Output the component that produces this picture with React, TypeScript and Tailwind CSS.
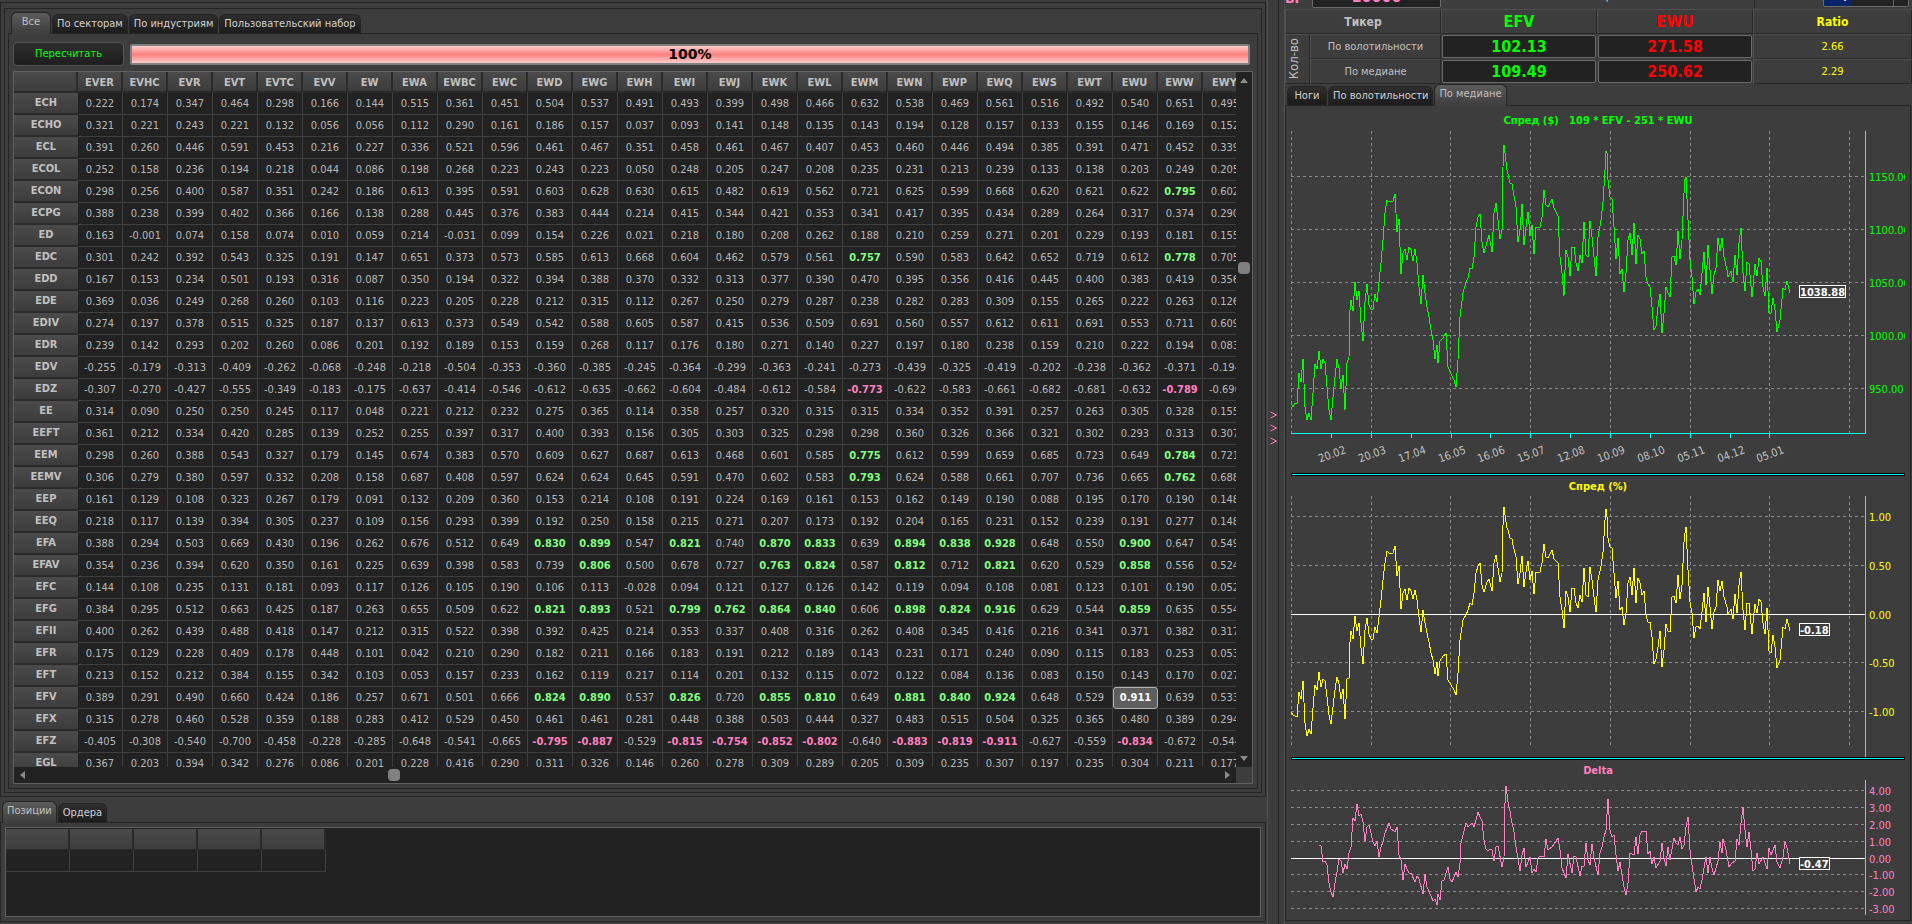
import { useState } from "react";
import clsx from "clsx";

const COLUMNS =
	"EVER EVHC EVR EVT EVTC EVV EW EWA EWBC EWC EWD EWG EWH EWI EWJ EWK EWL EWM EWN EWP EWQ EWS EWT EWU EWW EWY".split(
		" "
	);

// ticker followed by its correlation with every column
const ROWS = [
	"ECH 0.222 0.174 0.347 0.464 0.298 0.166 0.144 0.515 0.361 0.451 0.504 0.537 0.491 0.493 0.399 0.498 0.466 0.632 0.538 0.469 0.561 0.516 0.492 0.540 0.651 0.495",
	"ECHO 0.321 0.221 0.243 0.221 0.132 0.056 0.056 0.112 0.290 0.161 0.186 0.157 0.037 0.093 0.141 0.148 0.135 0.143 0.194 0.128 0.157 0.133 0.155 0.146 0.169 0.152",
	"ECL 0.391 0.260 0.446 0.591 0.453 0.216 0.227 0.336 0.521 0.596 0.461 0.467 0.351 0.458 0.461 0.467 0.407 0.453 0.460 0.446 0.494 0.385 0.391 0.471 0.452 0.339",
	"ECOL 0.252 0.158 0.236 0.194 0.218 0.044 0.086 0.198 0.268 0.223 0.243 0.223 0.050 0.248 0.205 0.247 0.208 0.235 0.231 0.213 0.239 0.133 0.138 0.203 0.249 0.205",
	"ECON 0.298 0.256 0.400 0.587 0.351 0.242 0.186 0.613 0.395 0.591 0.603 0.628 0.630 0.615 0.482 0.619 0.562 0.721 0.625 0.599 0.668 0.620 0.621 0.622 0.795 0.602",
	"ECPG 0.388 0.238 0.399 0.402 0.366 0.166 0.138 0.288 0.445 0.376 0.383 0.444 0.214 0.415 0.344 0.421 0.353 0.341 0.417 0.395 0.434 0.289 0.264 0.317 0.374 0.290",
	"ED 0.163 -0.001 0.074 0.158 0.074 0.010 0.059 0.214 -0.031 0.099 0.154 0.226 0.021 0.218 0.180 0.208 0.262 0.188 0.210 0.259 0.271 0.201 0.229 0.193 0.181 0.155",
	"EDC 0.301 0.242 0.392 0.543 0.325 0.191 0.147 0.651 0.373 0.573 0.585 0.613 0.668 0.604 0.462 0.579 0.561 0.757 0.590 0.583 0.642 0.652 0.719 0.612 0.778 0.705",
	"EDD 0.167 0.153 0.234 0.501 0.193 0.316 0.087 0.350 0.194 0.322 0.394 0.388 0.370 0.332 0.313 0.377 0.390 0.470 0.395 0.356 0.416 0.445 0.400 0.383 0.419 0.356",
	"EDE 0.369 0.036 0.249 0.268 0.260 0.103 0.116 0.223 0.205 0.228 0.212 0.315 0.112 0.267 0.250 0.279 0.287 0.238 0.282 0.283 0.309 0.155 0.265 0.222 0.263 0.126",
	"EDIV 0.274 0.197 0.378 0.515 0.325 0.187 0.137 0.613 0.373 0.549 0.542 0.588 0.605 0.587 0.415 0.536 0.509 0.691 0.560 0.557 0.612 0.611 0.691 0.553 0.711 0.609",
	"EDR 0.239 0.142 0.293 0.202 0.260 0.086 0.201 0.192 0.189 0.153 0.159 0.268 0.117 0.176 0.180 0.271 0.140 0.227 0.197 0.180 0.238 0.159 0.210 0.222 0.194 0.083",
	"EDV -0.255 -0.179 -0.313 -0.409 -0.262 -0.068 -0.248 -0.218 -0.504 -0.353 -0.360 -0.385 -0.245 -0.364 -0.299 -0.363 -0.241 -0.273 -0.439 -0.325 -0.419 -0.202 -0.238 -0.362 -0.371 -0.194",
	"EDZ -0.307 -0.270 -0.427 -0.555 -0.349 -0.183 -0.175 -0.637 -0.414 -0.546 -0.612 -0.635 -0.662 -0.604 -0.484 -0.612 -0.584 -0.773 -0.622 -0.583 -0.661 -0.682 -0.681 -0.632 -0.789 -0.690",
	"EE 0.314 0.090 0.250 0.250 0.245 0.117 0.048 0.221 0.212 0.232 0.275 0.365 0.114 0.358 0.257 0.320 0.315 0.315 0.334 0.352 0.391 0.257 0.263 0.305 0.328 0.155",
	"EEFT 0.361 0.212 0.334 0.420 0.285 0.139 0.252 0.255 0.397 0.317 0.400 0.393 0.156 0.305 0.303 0.325 0.298 0.298 0.360 0.326 0.366 0.321 0.302 0.293 0.313 0.307",
	"EEM 0.298 0.260 0.388 0.543 0.327 0.179 0.145 0.674 0.383 0.570 0.609 0.627 0.687 0.613 0.468 0.601 0.585 0.775 0.612 0.599 0.659 0.685 0.723 0.649 0.784 0.721",
	"EEMV 0.306 0.279 0.380 0.597 0.332 0.208 0.158 0.687 0.408 0.597 0.624 0.624 0.645 0.591 0.470 0.602 0.583 0.793 0.624 0.588 0.661 0.707 0.736 0.665 0.762 0.688",
	"EEP 0.161 0.129 0.108 0.323 0.267 0.179 0.091 0.132 0.209 0.360 0.153 0.214 0.108 0.191 0.224 0.169 0.161 0.153 0.162 0.149 0.190 0.088 0.195 0.170 0.190 0.148",
	"EEQ 0.218 0.117 0.139 0.394 0.305 0.237 0.109 0.156 0.293 0.399 0.192 0.250 0.158 0.215 0.271 0.207 0.173 0.192 0.204 0.165 0.231 0.152 0.239 0.191 0.277 0.148",
	"EFA 0.388 0.294 0.503 0.669 0.430 0.196 0.262 0.676 0.512 0.649 0.830 0.899 0.547 0.821 0.740 0.870 0.833 0.639 0.894 0.838 0.928 0.648 0.550 0.900 0.647 0.549",
	"EFAV 0.354 0.236 0.394 0.620 0.350 0.161 0.225 0.639 0.398 0.583 0.739 0.806 0.500 0.678 0.727 0.763 0.824 0.587 0.812 0.712 0.821 0.620 0.529 0.858 0.556 0.524",
	"EFC 0.144 0.108 0.235 0.131 0.181 0.093 0.117 0.126 0.105 0.190 0.106 0.113 -0.028 0.094 0.121 0.127 0.126 0.142 0.119 0.094 0.108 0.081 0.123 0.101 0.190 0.052",
	"EFG 0.384 0.295 0.512 0.663 0.425 0.187 0.263 0.655 0.509 0.622 0.821 0.893 0.521 0.799 0.762 0.864 0.840 0.606 0.898 0.824 0.916 0.629 0.544 0.859 0.635 0.554",
	"EFII 0.400 0.262 0.439 0.488 0.418 0.147 0.212 0.315 0.522 0.398 0.392 0.425 0.214 0.353 0.337 0.408 0.316 0.262 0.408 0.345 0.416 0.216 0.341 0.371 0.382 0.317",
	"EFR 0.175 0.129 0.228 0.409 0.178 0.448 0.101 0.042 0.210 0.290 0.182 0.211 0.166 0.183 0.191 0.212 0.189 0.143 0.231 0.171 0.240 0.090 0.115 0.183 0.253 0.053",
	"EFT 0.213 0.152 0.212 0.384 0.155 0.342 0.103 0.053 0.157 0.233 0.162 0.119 0.217 0.114 0.201 0.132 0.115 0.072 0.122 0.084 0.136 0.083 0.150 0.143 0.170 0.027",
	"EFV 0.389 0.291 0.490 0.660 0.424 0.186 0.257 0.671 0.501 0.666 0.824 0.890 0.537 0.826 0.720 0.855 0.810 0.649 0.881 0.840 0.924 0.648 0.529 0.911 0.639 0.533",
	"EFX 0.315 0.278 0.460 0.528 0.359 0.188 0.283 0.412 0.529 0.450 0.461 0.461 0.281 0.448 0.388 0.503 0.444 0.327 0.483 0.515 0.504 0.325 0.365 0.480 0.389 0.294",
	"EFZ -0.405 -0.308 -0.540 -0.700 -0.458 -0.228 -0.285 -0.648 -0.541 -0.665 -0.795 -0.887 -0.529 -0.815 -0.754 -0.852 -0.802 -0.640 -0.883 -0.819 -0.911 -0.627 -0.559 -0.834 -0.672 -0.544",
	"EGL 0.367 0.203 0.394 0.342 0.276 0.086 0.201 0.228 0.416 0.290 0.311 0.326 0.146 0.260 0.278 0.309 0.289 0.205 0.309 0.235 0.307 0.197 0.235 0.304 0.211 0.177",
].map((row) => row.split(" "));

// series samples, x and y on a fine grid that Chart scales down
const SPREAD =
	"28,880 33,891 38,880 43,880 48,790 53,815 58,747 63,890 68,929 73,910 78,929 83,850 88,762 93,778 98,724 103,776 108,748 113,760 118,830 123,900 128,929 133,860 137,800 142,747 147,775 152,836 157,796 162,899 167,760 172,740 175,600 178,570 182,602 187,517 192,569 197,542 202,640 207,692 212,575 217,523 222,585 227,597 232,598 237,553 242,577 247,515 252,460 257,390 262,310 266,270 271,275 281,273 286,253 292,365 296,328 302,491 306,430 311,417 316,451 321,411 326,420 331,452 336,417 341,460 346,530 351,581 356,495 361,550 366,590 371,620 376,660 381,690 386,746 389,706 393,758 398,693 405,685 412,670 418,770 425,793 432,810 438,830 443,750 448,620 455,550 462,515 467,505 473,473 478,478 483,440 487,350 492,322 498,313 503,395 508,428 515,395 520,376 527,425 532,310 537,280 542,330 547,388 551,360 554,170 557,106 560,130 563,180 567,192 572,218 576,222 580,240 585,290 591,396 596,360 601,283 606,405 612,350 616,307 622,379 626,346 631,431 636,352 646,352 651,320 656,240 661,285 666,292 676,268 681,295 690,318 695,440 700,490 706,557 708,480 711,420 716,440 720,497 725,412 730,412 735,460 740,482 745,436 750,460 755,337 760,435 765,440 770,333 775,380 780,440 785,497 790,380 797,330 803,275 807,180 809,123 812,130 815,210 820,262 825,268 830,350 835,446 840,385 845,492 850,478 854,545 860,490 865,390 870,370 875,436 879,340 884,461 889,374 894,388 899,433 904,422 909,500 914,522 919,530 924,590 929,661 934,648 939,590 943,553 949,668 954,610 959,530 963,550 968,560 973,440 978,438 983,464 988,364 993,446 998,390 1002,250 1004,215 1009,200 1012,330 1018,450 1023,500 1028,581 1033,545 1038,538 1043,554 1048,490 1053,427 1058,524 1063,406 1068,480 1073,551 1078,495 1083,475 1088,385 1093,422 1098,385 1103,442 1109,480 1113,502 1119,482 1124,517 1130,434 1135,494 1140,400 1145,355 1150,490 1155,544 1160,455 1165,462 1171,562 1175,530 1180,462 1185,497 1190,445 1195,455 1200,530 1204,559 1209,475 1215,608 1220,610 1224,563 1230,600 1235,665 1240,630 1249,535 1254,540 1259,512 1265,549";
const SPREAD_PERCENT =
	"28,757 33,766 43,770 48,697 53,718 58,663 63,790 68,829 73,808 78,823 83,745 88,675 93,690 98,637 103,680 108,656 113,662 118,712 123,765 128,793 133,742 137,690 142,652 147,672 152,718 157,688 162,776 167,658 172,654 175,545 178,512 182,537 187,469 192,513 197,490 202,565 207,613 212,510 217,475 222,523 227,536 232,538 237,502 242,520 247,470 252,420 257,360 262,310 266,274 271,280 281,278 286,259 292,349 296,318 302,448 306,400 311,388 316,419 321,385 326,392 331,416 336,390 341,420 346,470 351,517 356,450 361,490 366,520 371,545 376,580 381,600 386,643 389,606 393,649 398,603 405,588 412,582 418,660 425,675 432,690 438,706 443,640 448,540 455,480 462,465 467,450 473,430 478,436 483,400 487,340 492,318 498,310 503,375 508,397 515,365 520,357 527,393 532,308 537,285 542,325 547,367 551,340 554,195 557,142 560,165 563,203 567,210 572,234 576,238 580,255 585,290 591,373 596,340 601,287 606,380 612,335 616,303 622,360 626,334 631,401 636,337 641,340 647,335 651,310 656,252 661,290 666,293 676,270 681,297 690,308 695,410 700,450 706,505 708,440 711,392 716,412 720,455 725,384 730,384 735,430 740,443 745,405 750,427 755,325 760,405 765,410 770,321 775,360 780,410 785,455 790,360 797,318 803,275 807,180 809,148 812,170 815,235 820,262 825,265 830,340 835,415 840,363 845,450 850,440 854,494 860,460 865,370 870,352 875,406 879,325 884,429 889,355 894,368 899,404 904,394 909,465 914,485 919,487 924,530 929,611 934,598 939,560 943,514 949,620 954,570 959,493 963,512 968,517 973,412 978,408 983,430 988,346 993,416 998,375 1002,245 1005,220 1009,202 1012,330 1018,425 1023,460 1028,533 1033,502 1038,497 1043,508 1048,455 1053,400 1058,485 1063,382 1068,440 1073,506 1078,455 1083,440 1088,361 1093,394 1098,364 1103,410 1109,440 1113,461 1119,448 1124,478 1130,402 1135,460 1140,375 1145,337 1150,450 1155,509 1160,428 1165,430 1171,521 1175,490 1180,432 1185,460 1190,418 1195,425 1200,490 1204,521 1209,445 1215,572 1220,578 1224,526 1230,560 1235,623 1240,600 1249,502 1254,508 1259,478 1265,512";
const DELTA =
	"98,316 103,317 108,367 113,362 118,375 123,430 128,455 132,470 137,430 142,395 148,356 152,362 157,398 162,372 167,388 172,340 177,322 182,235 187,243 192,193 197,228 202,222 207,245 212,302 217,262 222,256 227,280 232,305 237,317 242,302 247,350 252,320 257,305 262,280 271,248 277,267 287,277 291,262 296,345 301,360 306,419 311,373 316,387 321,398 326,400 336,427 341,408 346,418 356,461 361,403 366,440 376,468 381,482 385,478 389,496 393,462 398,479 403,424 408,420 417,382 422,418 427,425 437,397 443,410 448,370 451,310 457,272 462,248 467,261 477,249 483,260 488,240 492,216 497,232 502,242 507,300 512,328 517,332 522,328 527,330 532,362 537,320 542,317 551,380 556,350 560,190 562,138 566,185 571,212 575,235 581,275 587,320 596,394 601,345 606,324 612,380 622,352 626,398 631,386 636,395 641,355 646,348 655,352 661,298 666,330 676,322 691,295 696,330 701,385 711,413 716,343 725,398 730,348 735,352 745,407 750,378 755,378 760,310 765,360 770,374 775,313 780,355 790,404 795,338 800,320 805,290 810,270 815,178 820,270 825,292 830,285 835,345 840,394 845,367 850,405 855,440 859,465 864,430 869,340 879,345 884,292 889,343 894,285 899,273 908,274 914,343 919,333 924,373 929,352 934,383 944,362 949,308 954,355 959,377 964,322 969,360 978,295 983,310 988,315 993,290 998,328 1003,315 1008,262 1013,232 1018,330 1023,375 1033,455 1038,440 1043,446 1048,420 1053,385 1058,350 1063,398 1068,350 1073,385 1078,404 1088,363 1092,307 1097,340 1101,298 1106,330 1115,382 1120,372 1130,362 1135,298 1140,315 1145,250 1149,202 1155,270 1160,322 1165,275 1170,330 1175,392 1180,388 1184,338 1189,373 1199,350 1209,386 1215,325 1219,345 1230,316 1235,365 1240,385 1249,350 1254,306 1259,325 1265,373";

const GRID_X = [0, 80, 159, 239, 319, 399, 478, 558];
const DATES = ["20.02", "20.03", "17.04", "16.05", "16.06", "15.07", "12.08", "10.09", "08.10", "05.11", "04.12", "05.01"];

function scalePoints(series: string, shift: number) {
	return series
		.split(" ")
		.map((p) => {
			const [x, y] = p.split(",").map(Number);
			return `${Math.round((x - 28) / 2.481)},${Math.round(y / 3) - shift}`;
		})
		.join(" ");
}

interface ChartProps {
	title: string;
	series: string;
	shift: number;
	color: string;
	height: number;
	gridBottom: number;
	axisBottom: number;
	levels: [number, string][];
	zero?: number;
	verticals?: boolean;
	dates?: boolean;
	last: string;
	lastY: number;
}

function Chart({
	title,
	series,
	shift,
	color,
	height,
	gridBottom,
	axisBottom,
	levels,
	zero,
	verticals = true,
	dates,
	last,
	lastY,
}: ChartProps) {
	const boxWidth = last.length > 5 ? 46 : 30;

	return (
		<svg
			viewBox={`0 0 614 ${height}`}
			className="block w-full h-auto"
			role="img"
			aria-label={title}
			fontSize="11"
		>
			<g shapeRendering="crispEdges" fill="none">
				<g stroke="#8a8a8a" strokeDasharray="3 3">
					{verticals &&
						GRID_X.map((x) => (
							<line key={x} x1={x + 0.5} x2={x + 0.5} y1={0} y2={gridBottom} />
						))}
					{levels
						.filter(([y]) => y !== zero)
						.map(([y]) => (
							<line key={y} x1={0} x2={574} y1={y + 0.5} y2={y + 0.5} />
						))}
				</g>
				{zero !== undefined && (
					<line x1={0} x2={574} y1={zero + 0.5} y2={zero + 0.5} stroke="#fff" />
				)}
				<line x1={574.5} x2={574.5} y1={0} y2={axisBottom} stroke="#00ffff" />
				{dates && (
					<path
						d={`M0 ${axisBottom + 0.5}H575 ${DATES.map(
							(_, i) => `M${40.5 + Math.round(i * 39.85)} ${axisBottom}v5`
						).join(" ")}`}
						stroke="#00ffff"
					/>
				)}
				<polyline points={scalePoints(series, shift)} stroke={color} />
			</g>

			{levels.map(([y, label]) => (
				<text key={y} x={578} y={y + 5} fill={color}>
					{label}
				</text>
			))}
			{dates &&
				DATES.map((d, i) => {
					const x = 41 + Math.round(i * 39.85);
					return (
						<text
							key={d}
							x={x}
							y={327}
							fill="#c0c0c0"
							textAnchor="middle"
							transform={`rotate(-20 ${x} 323)`}
						>
							{d}
						</text>
					);
				})}

			<rect
				x={508.5}
				y={lastY + 0.5}
				width={boxWidth}
				height={12}
				fill="#3d3d3d"
				stroke="#fff"
				shapeRendering="crispEdges"
			/>
			<text x={509} y={lastY + 11} fill="#fff" fontWeight="bold">
				{last}
			</text>
		</svg>
	);
}

function Tabs({ items, active, onChange }: { items: string[]; active: string; onChange: (t: string) => void }) {
	return (
		<div role="tablist" className="flex items-end gap-px">
			{items.map((item) => (
				<button
					key={item}
					type="button"
					role="tab"
					aria-selected={item === active}
					onClick={() => onChange(item)}
					className={clsx(
						"min-w-10 rounded-t-md border border-b-0 border-[#252525] whitespace-nowrap",
						item === active
							? "relative -mb-px h-[22px] px-1 pb-1 bg-linear-to-b from-[#5c5c5c] to-[#3d3d3d] text-[#c0c0c0]"
							: "h-[19px] px-1 bg-linear-to-b from-[#2e2e2e] to-[#1c1c1c] text-[#d0d0d0]"
					)}
				>
					{item}
				</button>
			))}
		</div>
	);
}

function Separator() {
	return <div className="h-[3px] border border-black bg-[#00ffff]" />;
}

function MatrixCell({ value, selected }: { value: string; selected: boolean }) {
	const n = Number(value);

	return (
		<td
			className={clsx(
				"h-[22px] p-0 text-center",
				selected
					? "rounded-[3px] border border-[#b0b0b0] bg-[#5e5e5e] font-bold text-white"
					: "border-r border-b border-[#3f3f3f]",
				!selected && n >= 0.75 && "font-bold text-[#80ff80]",
				!selected && n <= -0.75 && "font-bold text-[#ff80c0]"
			)}
		>
			{value}
		</td>
	);
}

function Matrix() {
	return (
		<table className="w-[1234px] table-fixed border-separate border-spacing-0">
			<colgroup>
				<col className="w-[64px]" />
				{COLUMNS.map((c) => (
					<col key={c} className="w-[45px]" />
				))}
			</colgroup>
			<thead>
				<tr>
					<th className="h-[21px] border-r-2 border-b-2 border-[#2a2a2a] bg-linear-to-b from-[#4b4b4b] to-[#3c3c3c] p-0" />
					{COLUMNS.map((c) => (
						<th
							key={c}
							scope="col"
							className="h-[21px] border-r-2 border-b-2 border-[#2a2a2a] bg-linear-to-b from-[#4b4b4b] to-[#3c3c3c] p-0 pt-[2px] font-bold text-[#c0c0c0]"
						>
							{c}
						</th>
					))}
				</tr>
			</thead>
			<tbody>
				{ROWS.map(([ticker, ...values]) => (
					<tr key={ticker}>
						<th
							scope="row"
							className="h-[22px] border-b-2 border-[#2a2a2a] bg-linear-to-b from-[#4b4b4b] to-[#3c3c3c] p-0 font-bold text-[#c0c0c0]"
						>
							{ticker}
						</th>
						{values.map((v, i) => (
							<MatrixCell
								key={i}
								value={v}
								selected={ticker === "EFV" && COLUMNS[i] === "EWU"}
							/>
						))}
					</tr>
				))}
			</tbody>
		</table>
	);
}

const labelCell = "border-t border-l border-t-[#505050] border-l-[#505050] border-r border-b border-r-[#282828] border-b-[#282828] p-0";
const valueInput = "block h-[23px] w-full rounded-[2px] border border-[#6a6a6a] bg-[#222] text-center text-base leading-4 font-bold";

export default function App() {
	const [groupTab, setGroupTab] = useState("Все");
	const [ordersTab, setOrdersTab] = useState("Позиции");
	const [chartTab, setChartTab] = useState("По медиане");

	return (
		<div className="flex h-screen overflow-hidden bg-[#3d3d3d] font-['DejaVu_Sans_Condensed','DejaVu_Sans',sans-serif] text-[11px] leading-[14px] text-[#c0c0c0]">
			<main className="flex min-w-0 flex-1 flex-col pt-[2px] pb-[2px]">
				<section className="flex min-h-0 flex-1 flex-col border border-[#252525] px-[3px] pt-[5px] pb-[3px]">
					<div className="flex min-h-0 flex-1 flex-col border border-[#252525] px-[3px] pt-[3px] pb-[3px]">
						<div className="px-[3px]">
							<Tabs
								items={["Все", "По секторам", "По индустриям", "Пользовательский набор"]}
								active={groupTab}
								onChange={setGroupTab}
							/>
						</div>
						<div className="flex min-h-0 flex-1 flex-col border border-[#252525] px-1 pt-2 pb-1">
							<div className="flex items-center gap-[6px]">
								<button
									type="button"
									className="h-[24px] w-[111px] rounded-[4px] border border-[#555] bg-linear-to-b from-[#2e2e2e] to-[#1e1e1e] text-[#00ff00]"
								>
									Пересчитать
								</button>
								<div
									role="progressbar"
									aria-valuenow={100}
									aria-label="Пересчёт"
									className="mr-[3px] flex h-[21px] flex-1 items-center justify-center rounded-[2px] border-2 border-[#808080] bg-linear-to-b from-[#ffcccc] via-[#ff8080] to-[#ffcccc] pb-px font-['DejaVu_Sans',sans-serif] text-sm leading-4 font-bold text-black"
								>
									100%
								</div>
							</div>

							<div className="mt-[5px] flex min-h-0 flex-1 border border-[#606060] bg-[#222]">
								<div className="flex min-w-0 flex-1 flex-col">
									<div className="min-h-0 flex-1 overflow-hidden text-[#b8b8b8]">
										<Matrix />
									</div>
									<div className="flex h-4 shrink-0 items-center px-[6px]">
										<svg viewBox="0 0 5 8" className="h-2 w-[5px]" fill="#8a8a8a">
											<path d="M5 0v8L0 4z" />
										</svg>
										<span className="ml-[30%] h-3 w-3 rounded-[4px] bg-[#808080]" />
										<svg viewBox="0 0 5 8" className="ml-auto h-2 w-[5px]" fill="#8a8a8a">
											<path d="M0 0v8L5 4z" />
										</svg>
									</div>
								</div>
								<div className="flex w-4 shrink-0 flex-col">
									<div className="flex flex-1 flex-col items-center py-[6px]">
										<svg viewBox="0 0 8 5" className="h-[5px] w-2" fill="#8a8a8a">
											<path d="M0 5h8L4 0z" />
										</svg>
										<span className="mt-[179px] h-3 w-3 rounded-[4px] bg-[#808080]" />
										<svg viewBox="0 0 8 5" className="mt-auto h-[5px] w-2" fill="#8a8a8a">
											<path d="M0 0h8L4 5z" />
										</svg>
									</div>
									<div className="h-4 bg-[#3d3d3d]" />
								</div>
							</div>
						</div>
					</div>
				</section>

				<section className="mt-[4px] shrink-0">
					<div className="px-[2px]">
						<Tabs items={["Позиции", "Ордера"]} active={ordersTab} onChange={setOrdersTab} />
					</div>
					<div className="border border-[#252525] px-1 pt-1 pb-1">
						<div className="h-[90px] border border-[#606060] bg-[#222] pt-px">
							<table className="w-[320px] table-fixed border-separate border-spacing-0">
								<thead>
									<tr>
										{[0, 1, 2, 3, 4].map((i) => (
											<th
												key={i}
												className="h-[21px] border-r-2 border-b border-[#2a2a2a] bg-linear-to-b from-[#4b4b4b] to-[#3c3c3c] p-0"
											/>
										))}
									</tr>
								</thead>
								<tbody>
									<tr>
										{[0, 1, 2, 3, 4].map((i) => (
											<td key={i} className="h-[22px] border-r border-b border-[#3f3f3f] p-0" />
										))}
									</tr>
								</tbody>
							</table>
						</div>
					</div>
				</section>
			</main>

			{/* Splitter */}
			<div className="mr-[5px] ml-px flex w-[12px] shrink-0 items-center justify-center border-x border-l-[#505050] border-r-[#282828]">
				<svg viewBox="0 0 7 34" className="-mt-[68px] h-[34px] w-[7px]" fill="none" stroke="#ff80c0">
					<path d="M.5 1l6 3-6 3M.5 14l6 3-6 3M.5 27l6 3-6 3" />
				</svg>
			</div>

			<aside className="flex w-[628px] shrink-0 flex-col border-l border-[#505050]">
				{/* Top row is scrolled almost out of view */}
				<div className="flex h-[9px] items-end overflow-hidden pb-px">
					<label htmlFor="balance" className="w-[27px] pb-[3px] text-sm leading-[14px] font-bold text-[#ff80c0]">
						БР
					</label>
					<input
						id="balance"
						className="h-[23px] w-[129px] rounded-[2px] border border-[#6a6a6a] bg-[#222] text-center text-base leading-4 font-bold text-[#ff80c0]"
						defaultValue="10000"
					/>
					<span className="flex-1 pb-[3px] text-center leading-[16px] font-bold">Позиции</span>
					<div className="flex w-[158px] items-end justify-end gap-1 border-l border-[#282828]">
						<label htmlFor="timeframe" className="pb-[3px] leading-[16px]">
							Timeframe
						</label>
						<select
							id="timeframe"
							className="mr-[3px] mb-px h-[20px] w-[86px] appearance-none rounded-[2px] border border-[#6a6a6a] bg-[linear-gradient(to_right,#0a246a_27px,#222_27px,#222_69px,#6a6a6a_69px,#6a6a6a_70px,#222_70px)] pb-[3px] text-white"
						>
							<option>Daily</option>
						</select>
					</div>
				</div>

				<table className="w-full table-fixed border-separate border-spacing-0">
					<colgroup>
						<col className="w-[25px]" />
						<col className="w-[131px]" />
						<col className="w-[156px]" />
						<col className="w-[156px]" />
						<col />
					</colgroup>
					<tbody>
						<tr className="h-[25px] font-bold">
							<th colSpan={2} className={clsx(labelCell, "pt-px text-xs")}>
								Тикер
							</th>
							<th className={clsx(labelCell, "pt-px text-base leading-4 text-[#00ff00]")}>EFV</th>
							<th className={clsx(labelCell, "pt-px text-base leading-4 text-[#ff0000]")}>EWU</th>
							<th className={clsx(labelCell, "pt-px text-xs text-[#ffff00]")}>Ratio</th>
						</tr>
						<tr className="h-[25px]">
							<th rowSpan={2} className={clsx(labelCell, "font-normal")}>
								<span className="mx-auto block rotate-180 text-[13px] leading-4 [writing-mode:vertical-rl]">
									Кол-во
								</span>
							</th>
							<td className={clsx(labelCell, "text-center")}>По волотильности</td>
							<td className="px-px py-0">
								<input aria-label="EFV по волотильности" className={clsx(valueInput, "text-[#00ff00]")} defaultValue="102.13" />
							</td>
							<td className="px-px py-0">
								<input aria-label="EWU по волотильности" className={clsx(valueInput, "text-[#ff0000]")} defaultValue="271.58" />
							</td>
							<td className={clsx(labelCell, "text-center text-[#ffff00]")}>2.66</td>
						</tr>
						<tr className="h-[25px]">
							<td className={clsx(labelCell, "text-center")}>По медиане</td>
							<td className="px-px py-0">
								<input aria-label="EFV по медиане" className={clsx(valueInput, "text-[#00ff00]")} defaultValue="109.49" />
							</td>
							<td className="px-px py-0">
								<input aria-label="EWU по медиане" className={clsx(valueInput, "text-[#ff0000]")} defaultValue="250.62" />
							</td>
							<td className={clsx(labelCell, "text-center text-[#ffff00]")}>2.29</td>
						</tr>
					</tbody>
				</table>

				<div className="px-[2px]">
					<Tabs
						items={["Ноги", "По волотильности", "По медиане"]}
						active={chartTab}
						onChange={setChartTab}
					/>
				</div>
				<div className="mr-px border border-[#252525] px-[5px] pb-[5px]">
					<h2 className="flex h-[25px] items-center justify-center pt-1 font-bold whitespace-pre text-[#00ff00]">
						{"Спред ($)   109 * EFV - 251 * EWU"}
					</h2>
					<Chart
						title="Спред ($)"
						series={SPREAD}
						shift={21}
						color="#00ff00"
						height={342}
						gridBottom={302}
						axisBottom={302}
						levels={[
							[45, "1150.00"],
							[98, "1100.00"],
							[151, "1050.00"],
							[204, "1000.00"],
							[257, "950.00"],
						]}
						dates
						last="1038.88"
						lastY={154}
					/>
					<Separator />
					<h2 className="flex h-5 items-center justify-center pt-px font-bold text-[#ffff00]">Спред (%)</h2>
					<Chart
						title="Спред (%)"
						series={SPREAD_PERCENT}
						shift={36}
						color="#ffff00"
						height={261}
						gridBottom={249}
						axisBottom={261}
						levels={[
							[20, "1.00"],
							[69, "0.50"],
							[118, "0.00"],
							[166, "-0.50"],
							[215, "-1.00"],
						]}
						zero={118}
						last="-0.18"
						lastY={127}
					/>
					<Separator />
					<h2 className="flex h-5 items-center justify-center pt-px font-bold text-[#ff80c0]">Delta</h2>
					<Chart
						title="Delta"
						series={DELTA}
						shift={40}
						color="#ff80c0"
						height={135}
						gridBottom={135}
						axisBottom={135}
						levels={[
							[10, "4.00"],
							[27, "3.00"],
							[44, "2.00"],
							[61, "1.00"],
							[78, "0.00"],
							[94, "-1.00"],
							[111, "-2.00"],
							[128, "-3.00"],
						]}
						zero={78}
						verticals={false}
						last="-0.47"
						lastY={77}
					/>
				</div>
			</aside>
		</div>
	);
}
